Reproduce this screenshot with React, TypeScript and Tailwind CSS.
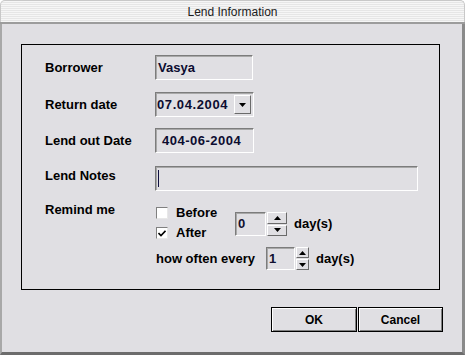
import { ReactNode } from "react";

const sunken =
  "border border-t-[#7c7c7c] border-l-[#7c7c7c] border-r-white border-b-white shadow-[inset_1px_1px_0_#a8a8a8]";
const raised =
  "border border-t-white border-l-white border-r-[#6a6a6a] border-b-[#6a6a6a] bg-[#e0dfe3]";

function Label({ children, className = "" }: { children: ReactNode; className?: string }) {
  return (
    <div className={`w-[110px] shrink-0 text-[13px] font-bold leading-[15px] ${className}`}>{children}</div>
  );
}

function Arrow({ up }: { up?: boolean }) {
  return (
    <svg width="7" height="4" viewBox="0 0 7 4">
      {up ? <path d="M3.5 0 L7 4 L0 4 Z" fill="#000" /> : <path d="M0 0 L7 0 L3.5 4 Z" fill="#000" />}
    </svg>
  );
}

function Spin({ value, boxW, btnW, h }: { value: string; boxW: number; btnW: number; h: number }) {
  return (
    <div className="flex" style={{ height: h }}>
      <div className={`${sunken} flex items-center pl-[2px] text-[13px] font-bold text-[#101030]`} style={{ width: boxW }}>
        {value}
      </div>
      <div className="ml-px flex flex-col gap-px" style={{ width: btnW }}>
        <div className={`${raised} flex flex-1 items-center justify-center`}>
          <Arrow up />
        </div>
        <div className={`${raised} flex flex-1 items-center justify-center`}>
          <Arrow />
        </div>
      </div>
    </div>
  );
}

function Check({ checked }: { checked?: boolean }) {
  return (
    <div className="flex h-[12px] w-[12px] items-center justify-center border border-t-[#808080] border-l-[#808080] border-r-[#e8e8e8] border-b-[#e8e8e8] bg-white">
      {checked && (
        <svg width="8" height="7" viewBox="0 0 8 7">
          <path d="M0.5 3 L3 5.5 L7.5 0.8" stroke="#000" strokeWidth="1.6" fill="none" />
        </svg>
      )}
    </div>
  );
}

export default function App() {
  return (
    <div className="flex h-[355px] w-[465px] flex-col overflow-hidden bg-white font-['Liberation_Sans',Arial,sans-serif] text-black">
      <div className="flex h-[22px] shrink-0 items-center justify-center rounded-t-[5px] border border-b-0 border-[#c8c8c8] bg-[repeating-linear-gradient(to_bottom,#f6f6f6_0px,#f6f6f6_1px,#e6e6e6_1px,#e6e6e6_2px)] text-[12px] text-[#1c1c1c]">
        Lend Information
      </div>
      <div className="h-[2px] shrink-0 bg-[#9c9c9c]" />
      <div className="flex flex-1 flex-col border-l-2 border-r-[3px] border-b-[3px] border-l-[#a8a8a8] border-r-[#8a8a8a] border-b-[#6c6c6c] bg-[#e0dfe3]">
        <div className="ml-[19px] mt-[20px] h-[246px] w-[419px] border border-black pl-[23px] pt-[10px]">
          <div className="flex h-[25px] items-center">
            <Label>Borrower</Label>
            <div className={`${sunken} flex h-[25px] w-[98px] items-center pl-[2px] text-[13px] font-bold text-[#0c0c30]`}>
              Vasya
            </div>
          </div>
          <div className="mt-[12px] flex h-[25px] items-center">
            <Label>Return date</Label>
            <div className={`${sunken} flex h-[25px] w-[99px] items-center pl-[1px] pr-[2px] text-[13px] font-bold tracking-[0.6px] text-[#0c0c30]`}>
              <span className="flex-1">07.04.2004</span>
              <div className={`${raised} flex h-[19px] w-[17px] items-center justify-center`}>
                <Arrow />
              </div>
            </div>
          </div>
          <div className="mt-[11px] flex h-[25px] items-center">
            <Label>Lend out Date</Label>
            <div className={`${sunken} flex h-[25px] w-[99px] items-center pl-[6px] text-[13px] font-bold tracking-[0.5px] text-[#0c0c30]`}>
              404-06-2004
            </div>
          </div>
          <div className="mt-[13px] flex h-[25px] items-center">
            <Label className="-mt-[6px]">Lend Notes</Label>
            <div className={`${sunken} flex h-[25px] w-[263px] items-center pl-[2px]`}>
              <div className="h-[17px] w-px bg-[#101040]" />
            </div>
          </div>
          <div className="mt-[11px] flex">
            <Label>Remind me</Label>
            <div className="pl-px">
              <div className="flex">
                <div className="w-[79px] pt-[5px]">
                  <div className="flex h-[12px] items-center gap-[8px]">
                    <Check />
                    <span className="text-[13px] font-bold">Before</span>
                  </div>
                  <div className="mt-[8px] flex h-[12px] items-center gap-[8px]">
                    <Check checked />
                    <span className="text-[13px] font-bold">After</span>
                  </div>
                </div>
                <div className="mt-[7px] flex items-center">
                  <Spin value="0" boxW={31} btnW={20} h={24} />
                  <span className="ml-[7px] text-[13px] font-bold">day(s)</span>
                </div>
              </div>
              <div className="mt-[8px] flex h-[23px] items-center">
                <span className="text-[13px] font-bold">how often every</span>
                <div className="ml-[11px]">
                  <Spin value="1" boxW={29} btnW={13} h={23} />
                </div>
                <span className="ml-[7px] text-[13px] font-bold">day(s)</span>
              </div>
            </div>
          </div>
        </div>
        <div className="mt-[17px] flex gap-px pl-[269px]">
          <button className="h-[25px] w-[86px] border border-black text-[12px] font-bold shadow-[inset_1px_1px_0_#fff,inset_-1px_-1px_0_#808080]">
            OK
          </button>
          <button className="h-[25px] w-[85px] border border-black text-[12px] font-bold shadow-[inset_1px_1px_0_#fff,inset_-1px_-1px_0_#808080]">
            Cancel
          </button>
        </div>
      </div>
    </div>
  );
}
